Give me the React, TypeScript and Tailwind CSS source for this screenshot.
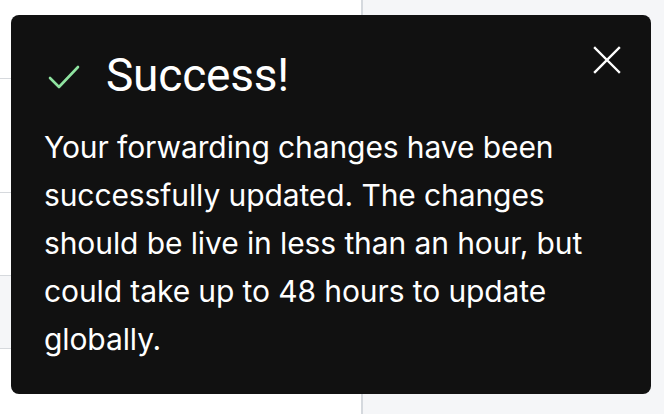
import React from "react";

const Row = ({ shaded, height }: { shaded?: boolean; height: string }) => (
  <div className={`${height} border-b border-[#d6d9dd] ${shaded ? "bg-[#f5f6f8]" : "bg-white"}`} />
);

const App = () => {
  return (
    <div className="relative w-[664px] h-[414px] overflow-hidden flex bg-white" style={{ fontFamily: "Roboto, 'Noto Sans', sans-serif" }}>
      {/* page behind the toast */}
      <div className="w-[361px] flex flex-col">
        <div className="h-[79px] border-b border-[#d6d9dd]" />
        <Row height="h-[114px]" />
        <Row height="h-[83px]" />
        <Row height="h-[73px]" shaded />
        <div className="flex-1" />
      </div>
      <div className="w-[2px] bg-[#d5d9de]" />
      <div className="flex-1 bg-[#f5f6f8]" />

      {/* toast */}
      <div className="absolute left-[11px] top-[15px] w-[640px] h-[379px] rounded-lg bg-[#111111] text-white pl-[33px] pr-[30px] pt-[32px]">
        <div className="flex items-center">
          <svg width="34" height="28" viewBox="0 0 34 28" className="ml-[3px] mr-[25px] mt-[4px]" fill="none">
            <path d="M3 15 L12 24 L31 4" stroke="#8fe3a0" strokeWidth="2.6" strokeLinecap="round" strokeLinejoin="round" />
          </svg>
          <h2 className="text-[46px] leading-[56px] font-normal tracking-[-0.2px]">Success!</h2>
        </div>
        <button className="absolute right-[30px] top-[31px] p-0" aria-label="Close">
          <svg width="28" height="28" viewBox="0 0 28 28" fill="none">
            <path d="M2 2 L26 26 M26 2 L2 26" stroke="#ffffff" strokeWidth="2.4" strokeLinecap="square" />
          </svg>
        </button>
        <p className="mt-[20px] text-[30px] leading-[48px] tracking-[-0.1px] font-[Inter,Roboto,sans-serif]">
          Your forwarding changes have been
          <br />
          successfully updated. The changes
          <br />
          should be live in less than an hour, but
          <br />
          could take up to 48 hours to update
          <br />
          globally.
        </p>
      </div>
    </div>
  );
};

export default App;
